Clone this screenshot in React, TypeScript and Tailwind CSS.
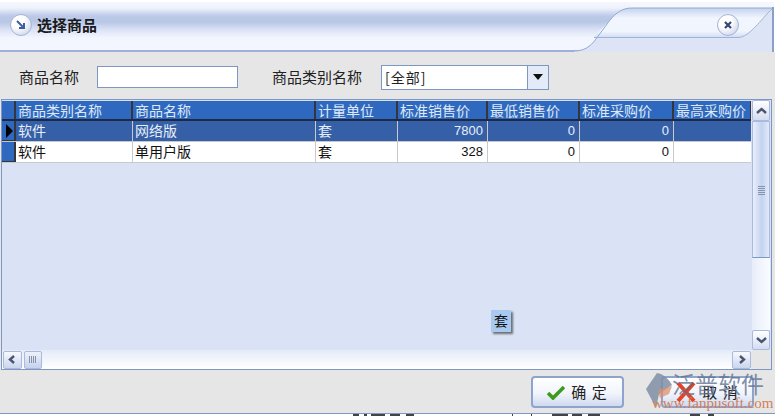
import React from "react";

const cols = ["w-[117px]", "w-[183px]", "w-[82px]", "w-[90px]", "w-[92px]", "w-[94px]", "w-[78px]"];
const heads = ["商品类别名称", "商品名称", "计量单位", "标准销售价", "最低销售价", "标准采购价", "最高采购价"];
const rows = [
  ["软件", "网络版", "套", "7800", "0", "0", ""],
  ["软件", "单用户版", "套", "328", "0", "0", ""],
];
const scraps = [
  "ml-[353px] w-[6px]", "ml-[5px] w-[3px]", "ml-[4px] w-[14px]", "ml-[5px] w-[10px]", "ml-[6px] w-[8px]",
  "ml-[98px] w-[1px]", "ml-[18px] w-[1px]", "ml-[20px] w-[16px]", "ml-[4px] w-[10px]", "ml-[6px] w-[12px]",
  "ml-[90px] w-[10px]", "ml-[8px] w-[6px]",
];

function Chevron({ d }: { d: string }) {
  return (
    <svg width="11" height="9" viewBox="0 0 11 9">
      <path d={d} fill="none" stroke="#4a5670" strokeWidth="2.4" />
    </svg>
  );
}

export default function App() {
  return (
    <div className="relative w-[776px] h-[416px] overflow-hidden bg-white font-['Noto_Sans_CJK_SC','Liberation_Sans',sans-serif] text-[14px] text-[#111]">
      <div className="w-[775px] h-[412px] mt-[2px] flex flex-col border-b border-b-[#7f97c4]">
        {/* Title bar */}
        <div className="relative w-[774px] h-[50px] shrink-0 flex items-center pl-[10px] pb-[5px] gap-[5px] bg-[linear-gradient(180deg,#f5f7fd_0px,#eef2fb_6px,#bccae8_14px,#b9c7e6_20px,#dbe3f5_28px,#f3f6fe_36px,#f3f6fe_48px,#9db0d8_48px,#9db0d8_50px)]">
          <svg className="absolute right-0 top-0" width="200" height="50" viewBox="0 0 200 50">
            <defs>
              <linearGradient id="tab" x1="0" y1="0" x2="0" y2="1">
                <stop offset="0" stopColor="#c5d2ec" />
                <stop offset="0.35" stopColor="#f1f5fe" />
                <stop offset="0.8" stopColor="#f1f5fe" />
                <stop offset="1" stopColor="#d5dff3" />
              </linearGradient>
            </defs>
            <rect x="56" y="0" width="144" height="6" fill="#f5f7fd" />
            <path d="M0 49 C10 49 16 45 22 37 L36 18 C42 11 48 6 58 6 L200 6 L200 50 L0 50 Z" fill="#dce4f5" />
            <path d="M20 35 L36 18 C42 11 48 6 58 6 L199 6 C186 18 178 35 164 35 Z" fill="url(#tab)" />
            <path d="M0 49 C10 49 16 45 22 37 L36 18 C42 11 48 6 58 6 L199 6" fill="none" stroke="#93a8d3" strokeWidth="1" />
            <path d="M20 35.5 L164 35.5 C176 35 186 18 199 6" fill="none" stroke="#9fb2da" strokeWidth="1" />
            <rect x="198" y="5" width="2" height="45" fill="#8ba0c8" />
          </svg>
          <span className="relative w-[22px] h-[22px] rounded-full border border-[#a8b5d3] bg-[radial-gradient(circle_at_35%_30%,#ffffff_35%,#bcc9e6_100%)] flex items-center justify-center">
            <svg width="10" height="10" viewBox="0 0 10 10">
              <path d="M1 1 L7 7 M8 3 V8 H3" fill="none" stroke="#3f5f9f" strokeWidth="2" />
            </svg>
          </span>
          <span className="relative font-bold text-[15px] leading-none text-[#1a1a1a]">选择商品</span>
          <span className="absolute right-[35px] top-[12px] w-[22px] h-[22px] rounded-full border border-[#a8b5d3] bg-[radial-gradient(circle_at_35%_30%,#ffffff_35%,#bcc9e6_100%)] flex items-center justify-center">
            <svg width="10" height="10" viewBox="0 0 10 10">
              <path d="M2 2 L8 8 M8 2 L2 8" fill="none" stroke="#36476f" strokeWidth="2.2" />
            </svg>
          </span>
        </div>

        {/* Body */}
        <div className="flex-1 min-h-0 flex flex-col bg-[#e6e6e6]">
          {/* Filter row */}
          <div className="h-[47px] shrink-0 flex items-center pl-[19px] pt-[3px] text-[15px] text-[#222]">
            <span className="w-[78px] whitespace-nowrap">商品名称</span>
            <span className="w-[141px] h-[22px] bg-white border border-[#7d96c2]" />
            <span className="ml-[34px] w-[109px] whitespace-nowrap">商品类别名称</span>
            <span className="w-[168px] h-[25px] bg-white border border-[#7d96c2] flex items-center justify-between">
              <span className="pl-[3px] leading-none text-[14px] tracking-[1px]">[全部]</span>
              <span className="w-[21px] h-full border-l border-[#7d96c2] bg-[#e3eaf8] flex items-center justify-center">
                <svg width="10" height="6" viewBox="0 0 10 6">
                  <path d="M0 0 H10 L5 6 Z" fill="#111" />
                </svg>
              </span>
            </span>
          </div>

          {/* Grid */}
          <div className="relative flex-1 min-h-0 flex flex-col ml-[1px] mr-[3px] border border-[#7d96c2] bg-[#dae3f5]">
            <div className="flex-1 min-h-0 flex">
              <div className="flex-1 min-w-0 flex flex-col">
                <div className="flex h-[21px] shrink-0 pt-[1px] border-b-2 border-b-[#1e2a44] bg-[#d5dfef]">
                  <span className="w-[14px] shrink-0 bg-[#2f68bf] border-r-2 border-r-[#33363d]" />
                  {heads.map((h, i) => (
                    <span
                      key={h}
                      className={`${cols[i]} shrink-0 bg-[#2f68bf] border-r-2 border-r-[#33363d] text-[#dfe8f8] pl-[2px] leading-[18px] whitespace-nowrap overflow-hidden`}
                    >
                      {h}
                    </span>
                  ))}
                </div>
                {rows.map((r, ri) => (
                  <div key={ri} className="flex h-[21px] shrink-0 border-b border-b-[#c9c9c9]">
                    <span className="w-[14px] shrink-0 pl-[4px] bg-[#2f68bf] border-r-2 border-r-[#33363d] border-b border-b-[#33363d] flex items-center">
                      {ri === 0 && (
                        <svg width="7" height="14" viewBox="0 0 7 14">
                          <path d="M0 0 L7 7 L0 14 Z" fill="#000" />
                        </svg>
                      )}
                    </span>
                    {r.map((c, i) => (
                      <span
                        key={i}
                        className={`${cols[i]} shrink-0 border-r border-r-[#c9c9c9] leading-[19px] whitespace-nowrap ${i > 2 ? "text-right pr-[4px] font-['Liberation_Sans',sans-serif] text-[13px]" : "pl-[2px]"} ${ri === 0 ? "bg-[#3560a8] text-[#e8eef9]" : "bg-white text-[#111]"}`}
                      >
                        {c}
                      </span>
                    ))}
                  </div>
                ))}
              </div>
              {/* Vertical scrollbar */}
              <div className="w-[20px] shrink-0 flex flex-col pl-[1px] pr-[1px] bg-[#dae3f5]">
                <span className="h-[21px] shrink-0 rounded-[2px] border border-[#a9badd] bg-[linear-gradient(180deg,#ffffff,#d3ddf1)] flex items-center justify-center">
                  <Chevron d="M1 7 L5.5 3 L10 7" />
                </span>
                <span className="h-[137px] shrink-0 pt-[64px] flex justify-center border border-[#a9badd] border-b-[#7d96c2] bg-[linear-gradient(90deg,#e9effb,#c3d3ef_55%,#e3eaf8)]">
                  <span className="w-[7px] h-[9px] bg-[repeating-linear-gradient(180deg,#8793ad_0,#8793ad_1px,transparent_1px,transparent_2px)]" />
                </span>
                <span className="flex-1 min-h-0 bg-[linear-gradient(90deg,#e6edfa,#fbfcff)]" />
                <span className="h-[20px] shrink-0 rounded-[2px] border border-[#a9badd] bg-[linear-gradient(180deg,#ffffff,#d3ddf1)] flex items-center justify-center">
                  <Chevron d="M1 2 L5.5 6 L10 2" />
                </span>
              </div>
            </div>
            {/* Horizontal scrollbar */}
            <div className="h-[19px] shrink-0 flex items-center">
              <div className="flex-1 h-full flex items-center pl-[1px] bg-[linear-gradient(180deg,#e4ebf8,#ffffff)]">
                <span className="w-[19px] h-[18px] rounded-[2px] border border-[#a9badd] bg-[linear-gradient(180deg,#f7f9fe,#c9d6ee)] flex items-center justify-center">
                  <Chevron d="M7 1 L3 4.5 L7 8" />
                </span>
                <span className="ml-[2px] w-[18px] h-[18px] rounded-[2px] border border-[#a9badd] bg-[linear-gradient(180deg,#eef2fa,#c5d2ec)] flex items-center justify-center">
                  <span className="w-[8px] h-[7px] bg-[repeating-linear-gradient(90deg,#8793ad_0,#8793ad_1px,transparent_1px,transparent_2px)]" />
                </span>
                <span className="ml-auto w-[19px] h-[18px] rounded-[2px] border border-[#a9badd] bg-[linear-gradient(180deg,#f7f9fe,#c9d6ee)] flex items-center justify-center">
                  <Chevron d="M4 1 L8 4.5 L4 8" />
                </span>
              </div>
              <span className="w-[20px] h-full shrink-0 bg-[#e6e6e6]" />
            </div>
            {/* Dragged cell */}
            <span className="absolute left-[489px] top-[210px] w-[20px] h-[22px] bg-[#a9c9ef] text-center leading-[21px] shadow-[2px_2px_2px_rgba(60,60,60,0.7)]">
              套
            </span>
          </div>

          {/* Footer */}
          <div className="h-[43px] shrink-0 flex justify-end items-center gap-[37px] pr-[21px] pt-[1px]">
            <Button label="确 定" icon="check" />
            <Button label="取 消" icon="x" />
          </div>
        </div>
      </div>

      {/* Cut-off edge of the page behind the dialog */}
      <div className="flex h-[2px]">
        {scraps.map((s, i) => (
          <span key={i} className={`${s} h-full shrink-0 bg-[#444]`} />
        ))}
      </div>

      {/* Watermark */}
      <div className="absolute left-[646px] top-[371px] w-[130px] h-[42px] pointer-events-none">
        <svg className="absolute left-0 top-[1px]" width="27" height="37" viewBox="0 0 27 37">
          <path d="M11 1 L0 17 L10 36 L13 22 L26 13 C22 6 17 2 11 1 Z" fill="#7f8ea6" opacity="0.85" />
          <path d="M12 18 L26 14 L23 22 L14 26 Z" fill="#d99070" opacity="0.75" />
        </svg>
        <span className="absolute left-[26px] top-[-1px] text-[23px] leading-[27px] whitespace-nowrap text-[#5f7394]/80">泛普软件</span>
        <span className="absolute left-[6px] top-[24px] text-[15px] leading-[16px] whitespace-nowrap font-['Liberation_Serif',serif] text-[#d2805a]">www.fanpusoft.com</span>
      </div>
    </div>
  );
}

function Button({ label, icon }: { label: string; icon: "check" | "x" }) {
  return (
    <span className="w-[93px] h-[32px] rounded-[4px] border-2 border-[#8ea3cd] bg-[linear-gradient(180deg,#ffffff_0%,#f1f4fb_55%,#cfdaef_100%)] flex items-center justify-center gap-[6px] text-[15px] text-[#222]">
      {icon === "check" ? (
        <svg width="18" height="16" viewBox="0 0 18 16">
          <path d="M1 9 L6 14 L17 3" fill="none" stroke="#3d9a1e" strokeWidth="3.6" />
        </svg>
      ) : (
        <svg width="20" height="22" viewBox="0 0 20 22">
          <path d="M2 2 L18 20 M18 2 L2 20" fill="none" stroke="#e2442a" strokeWidth="4" />
        </svg>
      )}
      <span className="whitespace-pre tracking-[1px]">{label}</span>
    </span>
  );
}
